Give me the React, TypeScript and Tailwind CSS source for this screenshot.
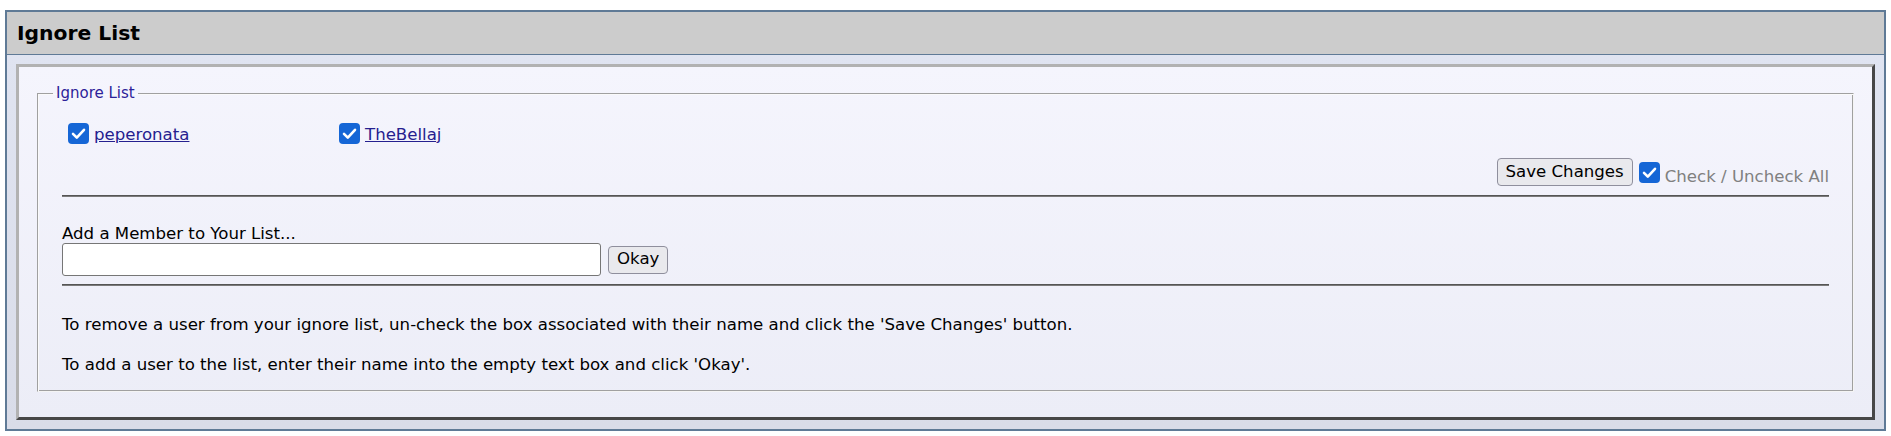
import React from "react";

const members = ["peperonata", "TheBellaj"];

const CheckMark: React.FC<{ className?: string }> = ({ className }) => (
  <span
    className={`inline-flex h-[21px] w-[21px] shrink-0 items-center justify-center rounded-[4px] bg-[#1566d6] ${className ?? ""}`}
  >
    <svg width="21" height="21" viewBox="0 0 21 21" fill="none">
      <path
        d="M5 10.8 L8.8 14.6 L16 6.8"
        stroke="white"
        strokeWidth="2.6"
        strokeLinecap="round"
        strokeLinejoin="round"
      />
    </svg>
  </span>
);

const App: React.FC = () => {
  return (
    <div className="min-h-[436px] w-full bg-white px-[5px] pt-[10px] pb-[4px] font-['Verdana','DejaVu_Sans',sans-serif] text-[16.6px] text-black">
      <div className="border-2 border-[#5f7a96]">
        <div className="flex h-[43px] items-center border-b border-[#5f7a96] bg-[#cccccc] pl-[10px] text-[20.3px] font-bold">
          Ignore List
        </div>

        <div className="bg-gradient-to-b from-[#e0e4f1] to-[#d9dce8] p-[9px]">
          <div className="border-[3px] border-t-[#b2b2b2] border-l-[#b2b2b2] border-r-[#474747] border-b-[#474747] bg-gradient-to-b from-[#f5f5fd] to-[#ecedf7] px-[18px] pt-[18px] pb-[25px]">
            <fieldset className="border border-t-[#a0a0a0] border-l-[#a0a0a0] border-r-[#f4f4f4] border-b-[#f4f4f4] px-[15px] pb-[17px] shadow-[inset_1px_1px_0_#fafafa,inset_-1px_-1px_0_#a0a0a0]">
              <legend className="px-[3px] text-[15px] leading-[17px] text-[#2c2299]">
                Ignore List
              </legend>

              <div className="px-[9px] pt-[21px]">
                <div className="flex">
                  {members.map((name) => (
                    <div key={name} className="flex h-[21px] w-[271px] items-center">
                      <CheckMark className="ml-[6px]" />
                      <a
                        href="#"
                        className="ml-[5px] pt-[2px] leading-[19px] text-[#25208f] underline"
                      >
                        {name}
                      </a>
                    </div>
                  ))}
                </div>

                <div className="mt-[14px] flex h-[28px] items-end justify-end">
                  <button
                    type="button"
                    className="h-[28px] rounded-[4px] border border-[#8f8f9d] bg-[#e9e9ed] px-[8px] text-[16.6px] leading-none text-black"
                  >
                    Save Changes
                  </button>
                  <CheckMark className="mb-[3px] ml-[6px]" />
                  <span className="ml-[5px] text-[#808080] leading-[19px]">
                    Check / Uncheck All
                  </span>
                </div>

                <div className="mt-[9px] border-t border-b border-t-[#555555] border-b-[#7a7a7a]" />

                <div className="mt-[28px] h-[18px] leading-[18px]">
                  Add a Member to Your List...
                </div>
                <div className="flex h-[33px] items-center gap-[7px]">
                  <input
                    type="text"
                    className="h-[33px] w-[539px] rounded-[3px] border border-[#767676] bg-white px-[4px] text-[16px] outline-none"
                  />
                  <button
                    type="button"
                    className="h-[28px] rounded-[4px] border border-[#8f8f9d] bg-[#e9e9ed] px-[8px] text-[16.6px] leading-none text-black"
                  >
                    Okay
                  </button>
                </div>

                <div className="mt-[8px] border-t border-b border-t-[#555555] border-b-[#7a7a7a]" />

                <p className="mt-[29px] leading-[19px]">
                  To remove a user from your ignore list, un-check the box
                  associated with their name and click the 'Save Changes'
                  button.
                </p>
                <p className="mt-[21px] leading-[19px]">
                  To add a user to the list, enter their name into the empty
                  text box and click 'Okay'.
                </p>
              </div>
            </fieldset>
          </div>
        </div>
      </div>
    </div>
  );
};

export default App;
